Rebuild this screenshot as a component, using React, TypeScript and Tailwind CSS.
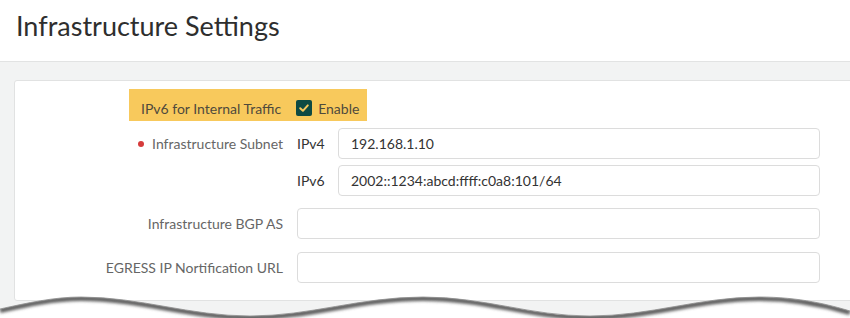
import React from "react";

const WAVE =
  "M0,21 C27,15 54,9 81,9 C140,9 190,28 250,28 C310,28 360,9 423,9 C485,9 530,28 590,28 C650,28 700,9 759,9 C800,9 830,17 850,23";

function TornEdge() {
  return (
    <svg
      className="absolute bottom-0 left-0"
      width="850"
      height="30"
      viewBox="0 0 850 30"
    >
      <defs>
        <clipPath id="below">
          <path d={`${WAVE} L850,30 L0,30 Z`} />
        </clipPath>
        <filter id="soft" x="-5%" y="-50%" width="110%" height="200%">
          <feGaussianBlur stdDeviation="1.5" />
        </filter>
      </defs>
      <path d={`${WAVE} L850,30 L0,30 Z`} fill="#ffffff" />
      <g clipPath="url(#below)">
        <path
          d={WAVE}
          transform="translate(0,1.5)"
          fill="none"
          stroke="#5e5e5e"
          strokeWidth="5"
          filter="url(#soft)"
        />
      </g>
      <path d={WAVE} fill="none" stroke="#8a8a8a" strokeWidth="0.8" />
    </svg>
  );
}

function TextInput({ value, width }: { value?: string; width: string }) {
  return (
    <div
      className={`${width} flex h-[31px] items-center rounded-[4px] border border-[#dcdcdc] bg-white px-3 text-[14px] text-[#333]`}
    >
      {value}
    </div>
  );
}

function FieldLabel({ children, required }: { children: React.ReactNode; required?: boolean }) {
  return (
    <div className="flex w-[268px] items-center justify-end text-[14px] text-[#666]">
      {required ? <span className="mr-[8px] h-[6px] w-[6px] rounded-full bg-[#d63b3b]" /> : null}
      {children}
    </div>
  );
}

export default function App() {
  return (
    <div
      className="relative h-[318px] w-[850px] overflow-hidden bg-white"
      style={{ fontFamily: "Lato, 'Open Sans', sans-serif" }}
    >
      <div className="h-[61px] pl-[16px] pt-[9px] text-[27px] leading-[33px] text-[#2e2e2e]">
        Infrastructure Settings
      </div>

      <div className="h-[257px] border-t border-[#e2e3e3] bg-[#f2f3f3] pl-[14px] pt-[18px]">
        <div className="h-[221px] w-[880px] rounded-[3px] border border-[#e1e2e2] bg-white pt-[8px]">
          <div className="ml-[114px] flex h-[32px] w-fit items-center bg-[#f8c95c] pl-[12px] pr-[8px] pt-[6px] text-[14px] text-[#4f4a3c]">
            <span>IPv6 for Internal Traffic</span>
            <span className="ml-[15px] flex h-[16px] w-[16px] items-center justify-center rounded-[2px] bg-[#0e4a43]">
              <svg width="12" height="12" viewBox="0 0 12 12">
                <path
                  d="M2.2 6.2 L4.9 8.8 L9.8 3.4"
                  fill="none"
                  stroke="#f8c95c"
                  strokeWidth="2"
                  strokeLinecap="round"
                  strokeLinejoin="round"
                />
              </svg>
            </span>
            <span className="ml-[6px]">Enable</span>
          </div>

          <div className="mt-[7px] flex items-center">
            <FieldLabel required>Infrastructure Subnet</FieldLabel>
            <span className="ml-[14px] w-[41px] text-[14px] text-[#333]">IPv4</span>
            <TextInput value="192.168.1.10" width="w-[482px]" />
          </div>

          <div className="mt-[6px] flex items-center">
            <div className="w-[268px]" />
            <span className="ml-[14px] w-[41px] text-[14px] text-[#333]">IPv6</span>
            <TextInput value="2002::1234:abcd:ffff:c0a8:101/64" width="w-[482px]" />
          </div>

          <div className="mt-[12px] flex items-center">
            <FieldLabel>Infrastructure BGP AS</FieldLabel>
            <div className="ml-[14px]">
              <TextInput width="w-[523px]" />
            </div>
          </div>

          <div className="mt-[13px] flex items-center">
            <FieldLabel>EGRESS IP Nortification URL</FieldLabel>
            <div className="ml-[14px]">
              <TextInput width="w-[523px]" />
            </div>
          </div>
        </div>
      </div>

      <TornEdge />
    </div>
  );
}
